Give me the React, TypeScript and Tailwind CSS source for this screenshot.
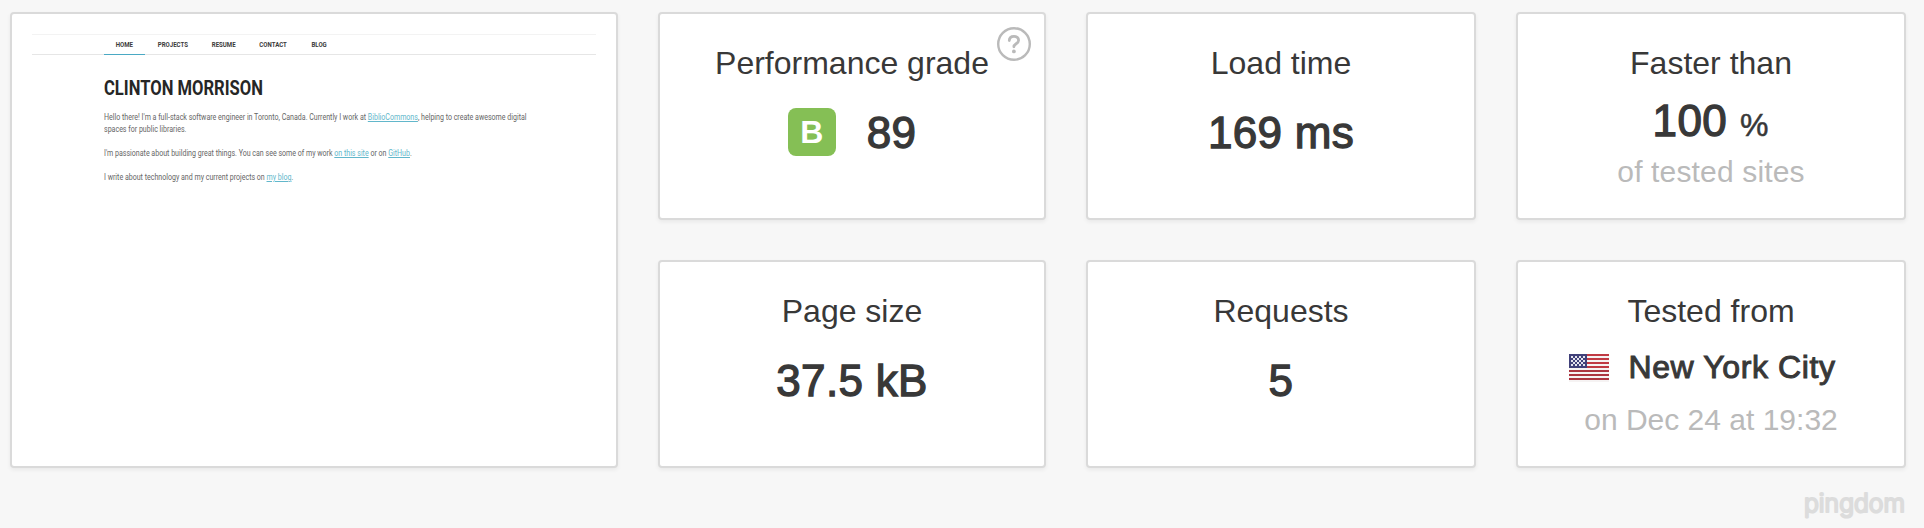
import type { ReactNode } from "react";

const shell =
  "rounded-[4px] border-2 border-[#dadada] bg-white shadow-[0_2px_4px_rgba(0,0,0,0.06)]";

function Card({ title, children }: { title: ReactNode; children: ReactNode }) {
  return (
    <section className={`${shell} relative flex h-[208px] flex-col items-center pt-[29px]`}>
      <h2 className="text-[32px] leading-[40px] whitespace-nowrap">{title}</h2>
      {children}
    </section>
  );
}

function Value({ children }: { children: ReactNode }) {
  return (
    <span className="block text-[44px] leading-[48px] tracking-[0.3px] whitespace-pre [-webkit-text-stroke:1.3px_#383838]">
      {children}
    </span>
  );
}

function Help() {
  return (
    <svg className="absolute top-[13px] right-[13px] size-[34px]" viewBox="0 0 34 34" fill="none">
      <circle cx="17" cy="17" r="15.8" stroke="#bababa" strokeWidth="2.4" />
      <path
        d="M12.3 13.6c0-2.6 1.9-4.3 4.7-4.3 2.7 0 4.6 1.6 4.6 3.9 0 3.6-4.7 3.4-4.7 6.6"
        stroke="#bababa"
        strokeWidth="2.8"
        strokeLinecap="round"
      />
      <circle cx="16.9" cy="24.4" r="1.9" fill="#bababa" />
    </svg>
  );
}

function Flag() {
  const stars: ReactNode[] = [];
  for (let row = 0; row < 5; row++) {
    for (let col = 0; col < 7; col++) {
      if ((row + col) % 2 === 0) {
        stars.push(
          <rect key={`${row}-${col}`} x={2 + col * 2} y={2 + row * 2} width="2" height="2" fill="#e4e4ee" />,
        );
      }
    }
  }
  return (
    <svg className="mt-[2px] h-[28px] w-[40px]" viewBox="0 0 40 28" shapeRendering="crispEdges">
      <rect width="40" height="28" fill="#f6f3f3" />
      {[0, 4, 8, 12, 16, 20, 24].map((y) => (
        <rect key={y} y={y} width="40" height="2" fill={y < 14 ? "#c03a43" : "#ab3540"} />
      ))}
      <rect width="18" height="14" fill="#41417a" />
      {stars}
    </svg>
  );
}

function Link({ children }: { children: ReactNode }) {
  return <a className="text-[#62b7cb] underline underline-offset-1">{children}</a>;
}

function Preview() {
  return (
    <div className={`${shell} h-[456px] w-[608px] pt-[20px] pr-[20px] pl-[20px] font-['Roboto',sans-serif]`}>
      <nav className="flex h-[21px] border-t border-b border-t-[#f3f3f3] border-b-[#e6e6e6] pl-[72px] text-[8px] leading-[20px] font-bold text-[#3a3a3a]">
        <span className="flex h-[20px] w-[41px] justify-center border-b border-[#4aa9c4]">
          <span className="scale-x-[0.76]">HOME</span>
        </span>
        <span className="flex w-[55px] justify-center"><span className="scale-x-[0.76]">PROJECTS</span></span>
        <span className="flex w-[48px] justify-center"><span className="scale-x-[0.76]">RESUME</span></span>
        <span className="flex w-[51px] justify-center"><span className="scale-x-[0.76]">CONTACT</span></span>
        <span className="flex w-[40px] justify-center"><span className="scale-x-[0.76]">BLOG</span></span>
      </nav>
      <div className="pl-[72px] text-[8.5px] leading-[12px] whitespace-nowrap text-[#666]">
        <h1 className="mt-[20px] w-max origin-left scale-x-[0.79] text-[21px] leading-[26px] font-bold text-[#262626]">
          CLINTON MORRISON
        </h1>
        <p className="mt-[10px] w-max origin-left scale-x-[0.83]">
          Hello there! I'm a full-stack software engineer in Toronto, Canada. Currently I work at{" "}
          <Link>BiblioCommons</Link>, helping to create awesome digital
          <br />
          spaces for public libraries.
        </p>
        <p className="mt-[12px] w-max origin-left scale-x-[0.83]">
          I'm passionate about building great things. You can see some of my work <Link>on this site</Link> or on{" "}
          <Link>GitHub</Link>.
        </p>
        <p className="mt-[12px] w-max origin-left scale-x-[0.83]">
          I write about technology and my current projects on <Link>my blog</Link>.
        </p>
      </div>
    </div>
  );
}

export default function App() {
  return (
    <main className="h-[528px] w-[1924px] bg-[#f7f7f7] pt-[12px] pl-[10px] font-['Liberation_Sans',Arial,sans-serif] text-[#383838]">
      <div className="flex gap-[40px]">
        <Preview />
        <div className="grid grid-cols-[388px_390px_390px] gap-[40px]">
          <Card title="Performance grade">
            <Help />
            <div className="mt-[25px] flex items-start gap-[31px]">
              <span className="flex size-[48px] items-center justify-center rounded-[8px] bg-[#85bf55] text-[32px] leading-none font-bold text-white">
                B
              </span>
              <div className="mt-[1px]"><Value>89</Value></div>
            </div>
          </Card>
          <Card title="Load time">
            <div className="mt-[26px]"><Value>169 ms</Value></div>
          </Card>
          <Card title="Faster than">
            <div className="mt-[14px] flex h-[48px] items-baseline gap-[13px] pr-[1px]">
              <Value>100</Value>
              <span className="text-[32px] leading-[40px] [-webkit-text-stroke:0.5px_#383838]">%</span>
            </div>
            <p className="mt-[9px] text-[30px] leading-[36px] tracking-[0.15px] text-[#bababa]">of tested sites</p>
          </Card>
          <Card title="Page size">
            <div className="mt-[26px]"><Value>37.5 kB</Value></div>
          </Card>
          <Card title="Requests">
            <div className="mt-[26px]"><Value>5</Value></div>
          </Card>
          <Card title="Tested from">
            <div className="mt-[16px] flex items-center gap-[20px] pr-[18px]">
              <Flag />
              <span className="text-[32px] leading-[40px] tracking-[0.6px] [-webkit-text-stroke:1px_#383838]">
                New York City
              </span>
            </div>
            <p className="mt-[15px] text-[30px] leading-[36px] text-[#bababa]">on Dec 24 at 19:32</p>
          </Card>
        </div>
      </div>
      <footer className="flex justify-end pt-[12px] pr-[18px]">
        <svg className="h-[46px] w-[106px] overflow-visible" viewBox="0 0 106 46">
          <text
            x="4"
            y="32"
            textLength="101"
            lengthAdjust="spacingAndGlyphs"
            className="fill-[#dcdcdc] stroke-[#dcdcdc] stroke-[2.2px] font-['Inter',sans-serif] text-[25px] font-light [stroke-linejoin:round]"
          >
            pingdom
          </text>
        </svg>
      </footer>
    </main>
  );
}
